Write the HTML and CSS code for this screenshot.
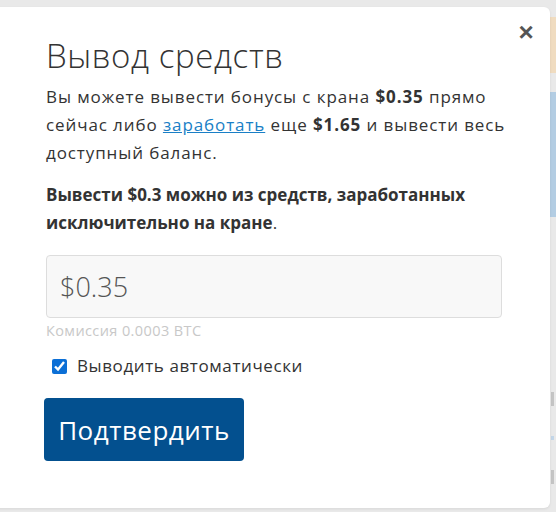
FILE: index.html
```html
<!DOCTYPE html>
<html lang="ru">
  <head>
    <meta charset="UTF-8" />
    <meta name="viewport" content="width=device-width, initial-scale=1.0" />
    <title>Вывод средств</title>
    <link rel="stylesheet" href="styles.css">
  </head>
  <body>
    <div class="modal">
      <button class="close-button" aria-label="Закрыть">&times;</button>

      <h1 class="modal-title">Вывод средств</h1>

      <p class="modal-text">
        Вы можете вывести бонусы с крана <strong>$0.35</strong> прямо
        сейчас либо <a href="#">заработать</a> еще <strong>$1.65</strong> и вывести весь
        доступный баланс.
      </p>

      <p class="modal-text modal-note">
        <strong>Вывести $0.3 можно из средств, заработанных исключительно на кране</strong>.
      </p>

      <div class="amount-field">
        <input class="amount-input" type="text" value="$0.35">
        <div class="fee">Комиссия 0.0003 BTC</div>
      </div>

      <label class="auto-check">
        <input type="checkbox" checked>
        <span>Выводить автоматически</span>
      </label>

      <button class="confirm-button">Подтвердить</button>
    </div>

    <div class="page-edge">
      <div class="edge-block beige"></div>
      <div class="edge-block blue"></div>
      <div class="edge-mark dark"></div>
      <div class="edge-mark light"></div>
      <div class="edge-mark dark"></div>
    </div>
  </body>
</html>
```

FILE: styles.css
```css
* {
  margin: 0;
  padding: 0;
  box-sizing: border-box;
}

body {
  font-family: "Open Sans", "Noto Sans", sans-serif;
  background: #e9e9e9;
  color: #333;
  width: 556px;
  height: 512px;
  overflow: hidden;
  display: flex;
  align-items: flex-start;
  padding-top: 7px;
}

.modal {
  position: relative;
  flex: none;
  width: 560px;
  height: 501px;
  margin-left: -10px;
  padding: 29px 40px 0 56px;
  background: #fff;
  border-radius: 6px;
  box-shadow: 0 1px 3px rgba(0, 0, 0, 0.08);
}

.close-button {
  position: absolute;
  top: 13px;
  right: 12px;
  width: 24px;
  height: 24px;
  border: none;
  background: none;
  color: #555;
  font-size: 26px;
  font-weight: 700;
  line-height: 24px;
  cursor: pointer;
}

.modal-title {
  font-size: 33px;
  font-weight: 300;
  line-height: 40px;
  color: #333;
  margin-bottom: 7px;
  letter-spacing: 0.6px;
}

.modal-text {
  font-size: 17px;
  line-height: 28px;
  letter-spacing: 0.9px;
  margin-bottom: 14px;
}

.modal-note {
  letter-spacing: 0;
}

.modal-text strong {
  font-weight: 700;
}

.modal-text a {
  color: #1a7fc6;
  text-decoration: underline;
}

.amount-field {
  margin-top: 18px;
}

.amount-input {
  display: block;
  width: 456px;
  height: 63px;
  padding: 0 13px;
  border: 1px solid #ddd;
  border-radius: 4px;
  background: #f8f8f8;
  font-family: inherit;
  font-size: 27px;
  font-weight: 300;
  color: #555;
  outline: none;
}

.fee {
  font-size: 14.5px;
  letter-spacing: 0.4px;
  color: #c8c8c8;
  margin-top: 3px;
  line-height: 20px;
}

.auto-check {
  display: flex;
  align-items: center;
  gap: 10px;
  margin-top: 13px;
  margin-left: 6px;
  font-size: 17px;
  letter-spacing: 0.6px;
  line-height: 24px;
  cursor: pointer;
}

.auto-check input {
  width: 15px;
  height: 15px;
  accent-color: #0b6fd6;
}

.confirm-button {
  display: block;
  margin-top: 20px;
  margin-left: -2px;
  width: 200px;
  height: 63px;
  border: none;
  border-radius: 4px;
  background: #03508f;
  color: #fff;
  font-family: inherit;
  font-size: 26px;
  letter-spacing: 0.5px;
  cursor: pointer;
}

.page-edge {
  flex: 1;
  display: flex;
  flex-direction: column;
  padding-top: 10px;
}

.edge-block.beige {
  height: 56px;
  background: #f0dcc0;
}

.edge-block.blue {
  height: 125px;
  margin-top: 19px;
  background: #b3cde3;
}

.edge-mark {
  width: 3px;
  height: 14px;
  margin-left: 1px;
}

.edge-mark.dark {
  background: #c4c4c4;
}

.edge-mark.light {
  height: 4px;
  background: #c3d6e8;
}

.edge-mark:nth-child(3) {
  margin-top: 175px;
}

.edge-mark:nth-child(4) {
  margin-top: 30px;
}

.edge-mark:nth-child(5) {
  margin-top: 30px;
}
```
